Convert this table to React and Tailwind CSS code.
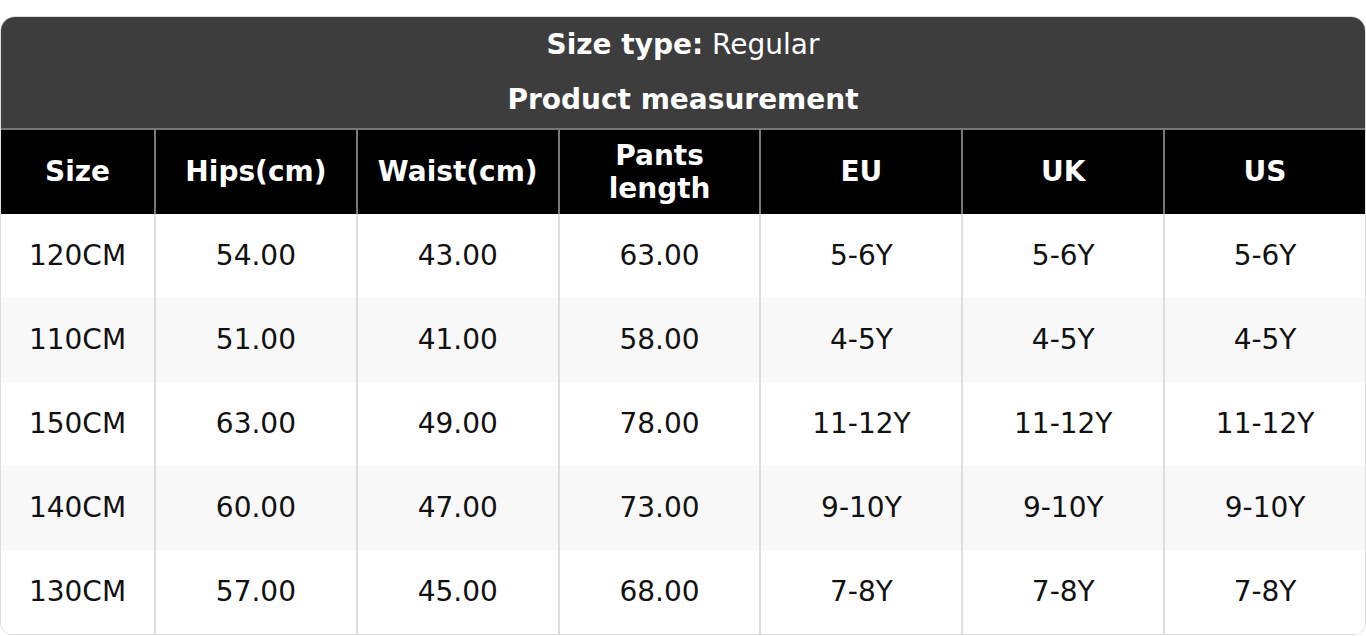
import React from "react";

const headers = ["Size", "Hips(cm)", "Waist(cm)", "Pants length", "EU", "UK", "US"];

const rows = [
  ["120CM", "54.00", "43.00", "63.00", "5-6Y", "5-6Y", "5-6Y"],
  ["110CM", "51.00", "41.00", "58.00", "4-5Y", "4-5Y", "4-5Y"],
  ["150CM", "63.00", "49.00", "78.00", "11-12Y", "11-12Y", "11-12Y"],
  ["140CM", "60.00", "47.00", "73.00", "9-10Y", "9-10Y", "9-10Y"],
  ["130CM", "57.00", "45.00", "68.00", "7-8Y", "7-8Y", "7-8Y"],
];

const SizeChart = () => {
  return (
    <div className="pt-4 bg-white font-['DejaVu_Sans',sans-serif]">
      <div className="rounded-t-[15px] rounded-b-[12px] overflow-hidden border border-[#dddddd]">
        {/* Title */}
        <div className="bg-[#3d3d3d] text-white text-[28px] text-center h-[113px] flex flex-col border-b-2 border-[#777777]">
          <div className="h-[55px] flex items-center justify-center">
            <span>
              <b>Size type:</b> Regular
            </span>
          </div>
          <div className="h-[56px] flex items-center justify-center font-bold">
            Product measurement
          </div>
        </div>

        {/* Header row */}
        <div className="grid grid-cols-[153px_repeat(6,1fr)] bg-black text-white font-bold text-[28px] leading-[1.18]">
          {headers.map((h, i) => (
            <div
              key={h}
              className={`h-[84px] flex items-center justify-center text-center px-2 ${
                i > 0 ? "border-l-2 border-[#777777]" : ""
              }`}
            >
              {h === "Pants length" ? (
                <span>
                  Pants
                  <br />
                  length
                </span>
              ) : (
                h
              )}
            </div>
          ))}
        </div>

        {/* Body rows */}
        {rows.map((r, ri) => (
          <div
            key={ri}
            className={`grid grid-cols-[153px_repeat(6,1fr)] text-[28px] text-[#111111] ${
              ri % 2 === 1 ? "bg-[#f8f8f8]" : "bg-white"
            }`}
          >
            {r.map((c, ci) => (
              <div
                key={ci}
                className={`h-[84px] flex items-center justify-center ${
                  ci > 0 ? "border-l-2 border-[#dddddd]" : ""
                }`}
              >
                {c}
              </div>
            ))}
          </div>
        ))}
      </div>
    </div>
  );
};

export default function App() {
  return <SizeChart />;
}
